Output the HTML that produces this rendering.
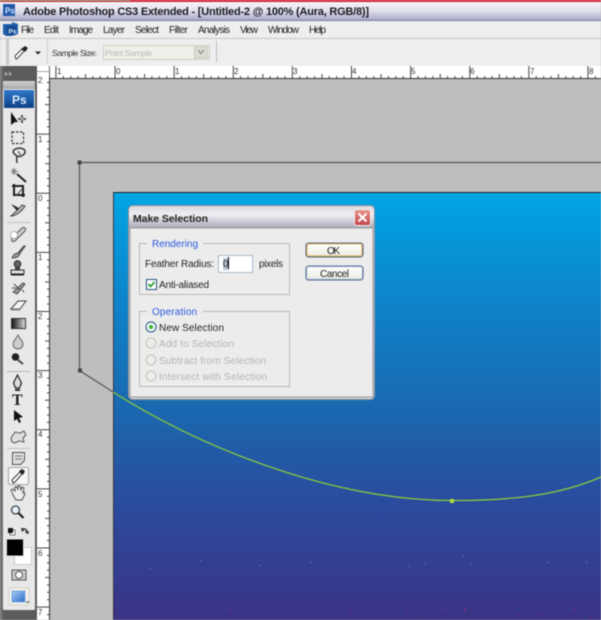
<!DOCTYPE html>
<html>
<head>
<meta charset="utf-8">
<style>
html,body{margin:0;padding:0;width:601px;height:620px;overflow:hidden;background:#bebebe}
svg{display:block;position:absolute;left:0;top:0;filter:blur(.45px)}
text{font-family:"Liberation Sans",sans-serif}
</style>
</head>
<body>
<svg width="601" height="620" viewBox="0 0 601 620" xmlns="http://www.w3.org/2000/svg">
<defs>
<linearGradient id="tb" x1="0" y1="0" x2="0" y2="1"><stop offset="0" stop-color="#f4f4f8"/><stop offset=".45" stop-color="#e4e4ee"/><stop offset="1" stop-color="#a9a9c6"/></linearGradient>
<linearGradient id="dt" x1="0" y1="0" x2="0" y2="1"><stop offset="0" stop-color="#d8d8e0"/><stop offset=".4" stop-color="#efeff3"/><stop offset="1" stop-color="#a8a8b8"/></linearGradient>
<linearGradient id="img" x1="0" y1="0" x2="0" y2="1"><stop offset="0" stop-color="#00a6e4"/><stop offset=".2" stop-color="#0b8ad0"/><stop offset=".5" stop-color="#1a69b0"/><stop offset=".72" stop-color="#2a4c9f"/><stop offset="1" stop-color="#3b3385"/></linearGradient>
<linearGradient id="ps" x1="0" y1="0" x2="0" y2="1"><stop offset="0" stop-color="#2f78c8"/><stop offset="1" stop-color="#0e3f88"/></linearGradient>
<linearGradient id="pt" x1="0" y1="0" x2="0" y2="1"><stop offset="0" stop-color="#d2d2d2"/><stop offset="1" stop-color="#a8a8a8"/></linearGradient>
<linearGradient id="gr" x1="0" y1="0" x2="1" y2="0"><stop offset="0" stop-color="#111"/><stop offset="1" stop-color="#ddd"/></linearGradient>
<linearGradient id="btn" x1="0" y1="0" x2="0" y2="1"><stop offset="0" stop-color="#fff"/><stop offset=".8" stop-color="#efefe8"/><stop offset="1" stop-color="#d8d8d0"/></linearGradient>
<linearGradient id="cl" x1="0" y1="0" x2="0" y2="1"><stop offset="0" stop-color="#e89a8a"/><stop offset="1" stop-color="#c0404a"/></linearGradient>
<linearGradient id="sm" x1="0" y1="0" x2="1" y2="1"><stop offset="0" stop-color="#a8d0f8"/><stop offset="1" stop-color="#2a68c8"/></linearGradient>
<pattern id="hr" x="55.4" y="66" width="59.12" height="13" patternUnits="userSpaceOnUse">
<path d="M.5 0V12M7.9 10V12M15.3 10V12M22.7 10V12M30.1 8V12M37.4 10V12M44.8 10V12M52.2 10V12" stroke="#444" stroke-width="1" fill="none"/>
</pattern>
<pattern id="vr" x="37" y="15.4" width="13" height="59.12" patternUnits="userSpaceOnUse">
<path d="M0 .5H12M10 7.9H12M10 15.3H12M10 22.7H12M8 30.1H12M10 37.4H12M10 44.8H12M10 52.2H12" stroke="#444" stroke-width="1" fill="none"/>
</pattern>
</defs>

<!-- title bar -->
<rect width="601" height="2" fill="#d8243c"/>
<rect x="0" y="0" width="130" height="1" fill="#909a60"/>
<rect y="2" width="601" height="18" fill="url(#tb)"/>
<rect y="20" width="601" height="1" fill="#7d7da0"/>
<rect x="3" y="4" width="12" height="12" fill="#2459a8"/>
<text x="5" y="13.5" font-size="8" font-weight="bold" fill="#cfe4ff">Ps</text>
<text x="23" y="15" font-size="11" font-weight="bold" fill="#1a1a22" textLength="346" lengthAdjust="spacing">Adobe Photoshop CS3 Extended - [Untitled-2 @ 100% (Aura, RGB/8)]</text>

<!-- menu -->
<rect y="21" width="601" height="17" fill="#eeeeee"/>
<rect y="38" width="601" height="1" fill="#c6c6c6"/>
<path d="M3 24h9v-2l6 2v10l-6 2H6l-3-2z" fill="#1f5ea8"/>
<rect x="7" y="26" width="9" height="9" fill="#174a90"/>
<text x="8.500" y="33.500" font-size="6.500" font-weight="bold" fill="#dce9fb">Ps</text>
<g font-size="10" fill="#222">
<text x="21" y="33" textLength="13">File</text>
<text x="44" y="33" textLength="15">Edit</text>
<text x="69" y="33" textLength="24">Image</text>
<text x="103" y="33" textLength="22">Layer</text>
<text x="135" y="33" textLength="24">Select</text>
<text x="169" y="33" textLength="19">Filter</text>
<text x="198" y="33" textLength="32">Analysis</text>
<text x="240" y="33" textLength="18">View</text>
<text x="268" y="33" textLength="31">Window</text>
<text x="309" y="33" textLength="17">Help</text>
</g>

<!-- options bar -->
<rect y="39" width="601" height="27" fill="#eeeeee"/>
<rect x="6" y="39" width="3" height="26" fill="#c8c8c8"/>
<rect x="47" y="39" width="1" height="26" fill="#cfcfcf"/>
<path d="M16 59l2-1 6-7-2-2-7 7z" fill="#fff" stroke="#444" stroke-width="1"/>
<path d="M21 49l4-3 3 2-3 4z" fill="#222"/>
<path d="M35 51.500h6l-3 3z" fill="#222"/>
<text x="52" y="56" font-size="8.500" fill="#333" textLength="45">Sample Size:</text>
<rect x="103.500" y="45.500" width="106" height="14" fill="#f0f0ea" stroke="#cdcdc4"/>
<text x="105" y="56" font-size="8.500" fill="#b8b8b8" textLength="47">Point Sample</text>
<rect x="194.500" y="47" width="13" height="11" fill="#dcdcd4" stroke="#c8c8c0"/>
<path d="M198 50l3 3.500 3-3.500" fill="none" stroke="#999" stroke-width="1.500"/>
<rect x="216" y="41" width="1" height="21" fill="#bdbdbd"/>

<!-- canvas bg -->
<rect x="50" y="79" width="551" height="541" fill="#bebebe"/>

<!-- rulers -->
<rect x="37" y="66" width="564" height="13" fill="#fff"/>
<rect x="37" y="78" width="564" height="1" fill="#333"/>
<rect x="37" y="66" width="13" height="554" fill="#fff"/>
<rect x="49" y="66" width="1" height="554" fill="#333"/>
<rect x="50" y="66" width="551" height="12" fill="url(#hr)"/>
<rect x="37" y="79" width="12" height="541" fill="url(#vr)"/>
<rect x="37" y="71" width="13" height="1" fill="#aaa"/>
<rect x="49" y="66" width="1" height="12" fill="#666"/>
<g font-size="8" fill="#333">
<text x="57" y="74">1</text><text x="116" y="74">0</text><text x="175" y="74">1</text><text x="234" y="74">2</text><text x="293" y="74">3</text><text x="352" y="74">4</text><text x="411" y="74">5</text><text x="470" y="74">6</text><text x="530" y="74">7</text><text x="589" y="74">8</text>
<text x="38" y="83">2</text><text x="38" y="142">1</text><text x="38" y="201">0</text><text x="38" y="260">1</text><text x="38" y="319">2</text><text x="38" y="378">3</text><text x="38" y="437">4</text><text x="38" y="497">5</text><text x="38" y="556">6</text><text x="38" y="615">7</text>
</g>

<!-- toolbox -->
<rect x="0" y="66" width="37" height="554" fill="#5c5c5c"/>
<rect x="0" y="66" width="3" height="554" fill="#707070"/>
<path d="M5 71.500l3 2.500-3 2.500zM9 71.500l3 2.500-3 2.500z" fill="#aaa"/>
<rect x="3" y="81" width="32" height="529" rx="1.500" fill="#e8e8e8"/>
<rect x="3" y="81" width="32" height="8" fill="url(#pt)"/>
<rect x="4" y="90" width="30" height="18" fill="url(#ps)"/>
<text x="12" y="104" font-size="12" font-weight="bold" fill="#d8e8fa">Ps</text>

<!-- move -->
<path d="M11 112v13l4-3h3z" fill="#111"/>
<path d="M18 119h8M22 115v8" stroke="#222" stroke-width="1.500"/>
<rect x="20" y="117" width="4" height="4" fill="#999"/>
<!-- marquee -->
<rect x="12" y="132" width="11.500" height="11.500" fill="none" stroke="#333" stroke-width="1.200" stroke-dasharray="2.500 1.500"/>
<!-- lasso -->
<path d="M14 150c4-3 10-2 11 1 1 3-5 7-8 5-3-2-5-4-3-6zM17 156c-1 3 0 5 0 7" fill="none" stroke="#333" stroke-width="1.500"/>
<path d="M18 151l3 5" stroke="#777" stroke-width="1.500"/>
<!-- wand -->
<path d="M17 174l9 8" stroke="#222" stroke-width="2"/>
<path d="M14 168v7M11 171.500h7M12 169l4 5M16 169l-4 5" stroke="#777" stroke-width=".9"/>
<!-- crop -->
<path d="M14 184v11h11M12 186h11v11" fill="none" stroke="#222" stroke-width="2"/>
<path d="M16 196l6-7" stroke="#555"/>
<!-- slice -->
<path d="M11 204l6 3 4 3-3 2z" fill="#222"/>
<path d="M11 216c5 0 11-5 14-10l-3-1c-3 4-7 7-11 11z" fill="#bbb" stroke="#333" stroke-width=".9"/>
<!-- separators -->
<rect x="7" y="222" width="23" height="1" fill="#c0c0c0"/>
<rect x="7" y="371" width="23" height="1" fill="#b4b4b4"/>
<rect x="7" y="448" width="23" height="1" fill="#c0c0c0"/>
<!-- heal -->
<path d="M12 238l10-10c2-2 5 1 3 3l-10 10c-2 2-5-1-3-3z" fill="#ccc" stroke="#555"/>
<circle cx="14" cy="235" r="3.500" fill="#fff" stroke="#999" stroke-width=".7"/>
<!-- brush -->
<path d="M18 252l6-7 2 1-6 8z" fill="#555"/>
<path d="M12 258c1-3 3-5 6-5l2 1c-1 3-4 4-8 4z" fill="#999" stroke="#333" stroke-width=".7"/>
<!-- stamp -->
<circle cx="17.500" cy="264" r="3.300" fill="#666" stroke="#222"/>
<rect x="15" y="267" width="5" height="3" fill="#444"/>
<rect x="11" y="270" width="13" height="4" fill="#ddd" stroke="#333"/>
<rect x="11" y="274" width="13" height="1.500" fill="#222"/>
<!-- history -->
<path d="M13 292l10-9 2 1-8 10z" fill="#999" stroke="#333" stroke-width=".8"/>
<path d="M14 284l6 6M12 288h4M22 290l2 2" stroke="#444"/>
<!-- eraser -->
<path d="M11 309l7-8h8l-6 8z" fill="#f4f4f4" stroke="#444"/>
<path d="M11 309h9v1.500h-9z" fill="#888"/>
<!-- gradient -->
<rect x="11.500" y="318.500" width="14" height="10" fill="url(#gr)" stroke="#333"/>
<!-- blur -->
<path d="M18 335c2 4 5 6 5 9a5 5 0 0 1-10 0c0-3 3-5 5-9z" fill="#ccc" stroke="#666"/>
<!-- dodge -->
<circle cx="15.500" cy="357" r="3.800" fill="#222"/>
<path d="M18 360l5 4" stroke="#444" stroke-width="2"/>
<!-- pen -->
<path d="M17.500 375l4 8-2 5h-4l-2-5z" fill="#ddd" stroke="#222" stroke-width="1.200"/>
<path d="M15 389h5v2h-5z" fill="#333"/>
<!-- type -->
<text x="12" y="405" font-size="16" font-weight="bold" fill="#222" style="font-family:'Liberation Serif',serif">T</text>
<!-- path select -->
<path d="M14 421v-11l9 7-4 1 2 4-2 1-2-4z" fill="#111"/>
<!-- shape -->
<path d="M11 438l4-6 5 1 4-2 2 4-3 3 1 4-5-1-4 2-3-1z" fill="#ddd" stroke="#555" stroke-width="1"/>
<!-- notes -->
<path d="M12.500 452.500h12v8l-4 4h-8z" fill="#ddd" stroke="#555"/>
<path d="M15 456h7M15 459h7" stroke="#777"/>
<!-- eyedropper selected -->
<rect x="8.500" y="467.500" width="20" height="17" rx="1.500" fill="#f6f6f6" stroke="#a4a4b0"/>
<path d="M13 483l2-1 7-8-2-2-8 8z" fill="#fff" stroke="#333"/>
<path d="M19 471l3-2 3 2-2 4z" fill="#222"/>
<!-- hand -->
<path d="M13 495l-2-5 2-1 2 2v-4l2 0 1 3v-4l2 0 1 4 1-3 2 1-1 5 1-1 1 2-3 6h-6z" fill="#eee" stroke="#444" stroke-width=".9"/>
<!-- zoom -->
<circle cx="15.500" cy="510" r="4" fill="#e4eef8" stroke="#444" stroke-width="1.300"/>
<path d="M18.500 513l5 5" stroke="#222" stroke-width="2.200"/>
<!-- small colors -->
<rect x="10" y="530" width="5" height="5" fill="#fff" stroke="#444" stroke-width=".7"/>
<rect x="8" y="528" width="5" height="5" fill="#111"/>
<path d="M22 529c3-1 5 1 6 4M21.500 528l1 3 2-2M28 534l-2-2 3 0" fill="none" stroke="#333" stroke-width="1.200"/>
<!-- colors -->
<rect x="14.500" y="547.500" width="17" height="17" fill="#fff" stroke="#ccc"/>
<rect x="6.500" y="539" width="17" height="17" fill="#000" stroke="#ddd"/>
<!-- quick mask -->
<rect x="12" y="570" width="14" height="10" fill="#ccc" stroke="#555"/>
<circle cx="19" cy="575" r="3.500" fill="#fff" stroke="#555"/>
<!-- screen mode -->
<rect x="9" y="588" width="20" height="17" rx="2" fill="#f4f4ee" stroke="#d0d0c8"/>
<rect x="12" y="591" width="13" height="11" fill="url(#sm)" stroke="#7ba8e0"/>
<path d="M26 603h3l-1.500-2z M27 603l2-2v2z" fill="#222"/>

<!-- document -->
<rect x="113" y="192" width="488" height="428" fill="url(#img)"/>
<rect x="113" y="192" width="1" height="428" fill="#333344"/>
<rect x="113" y="192" width="488" height="1" fill="#223"/>

<!-- noise -->
<g>
<rect x="407" y="610" width="1" height="1" fill="#c02a7a"/><rect x="444" y="610" width="1" height="1" fill="#c02a7a"/><rect x="464" y="610" width="1" height="1" fill="#c02a7a"/><rect x="519" y="615" width="1" height="1" fill="#d02060"/><rect x="464" y="609" width="1" height="1" fill="#d02060"/><rect x="574" y="608" width="1" height="1" fill="#d02060"/><rect x="538" y="614" width="1" height="1" fill="#c02a9a"/><rect x="590" y="616" width="1" height="1" fill="#d02060"/><rect x="422" y="616" width="1" height="1" fill="#c02a7a"/>
<rect x="409" y="566" width="1" height="1" fill="#7aa0d8"/><rect x="425" y="563" width="1" height="1" fill="#7aa0d8"/><rect x="463" y="556" width="1" height="1" fill="#7aa0d8"/><rect x="470" y="564" width="1" height="1" fill="#7aa0d8"/><rect x="547" y="562" width="1" height="1" fill="#7aa0d8"/><rect x="586" y="562" width="1" height="1" fill="#7aa0d8"/>
<rect x="200" y="560" width="1" height="1" fill="#7aa0d8"/><rect x="260" y="565" width="1" height="1" fill="#7aa0d8"/><rect x="310" y="562" width="1" height="1" fill="#7aa0d8"/><rect x="150" y="568" width="1" height="1" fill="#7aa0d8"/><rect x="350" y="612" width="1" height="1" fill="#c02a7a"/><rect x="230" y="610" width="1" height="1" fill="#c02a7a"/>
</g>

<!-- paths -->
<path d="M79.500 162.500H601M79.500 162.500V370.500L113 392" fill="none" stroke="#555" stroke-width="1.200"/>
<path d="M113 392C205 450 335 500.500 452 500.500C505 500.500 555 497 601 477" fill="none" stroke="#86c83e" stroke-width="1.300"/>
<rect x="77.500" y="160.500" width="4" height="4" fill="#444"/>
<rect x="78" y="368.500" width="4" height="4" fill="#444"/>
<rect x="450" y="499" width="4" height="4" fill="#b4dc3c"/>

<!-- dialog -->
<rect x="128.500" y="205.500" width="246" height="194" rx="4" fill="#d0d0d4" stroke="#8c8c98"/>
<path d="M129 228v-18a4 4 0 0 1 4-4h237a4 4 0 0 1 4 4v18z" fill="url(#dt)"/>
<text x="133" y="222" font-size="10.500" font-weight="bold" fill="#222" textLength="75">Make Selection</text>
<rect x="354.500" y="209.500" width="16" height="16" rx="2" fill="url(#cl)" stroke="#f4f0f0"/>
<path d="M358.500 213.500l8 8M366.500 213.500l-8 8" stroke="#fff" stroke-width="2"/>
<rect x="130" y="228" width="243" height="169" fill="#ededed" stroke="#9a9aa2"/>
<rect x="131" y="229" width="241" height="167" fill="#ececec"/>

<rect x="139.500" y="243.500" width="150" height="51" fill="none" stroke="#b8b8b0"/>
<rect x="147" y="241" width="56" height="5" fill="#ececec"/>
<text x="152" y="247" font-size="10" fill="#2a5ae0" textLength="46">Rendering</text>
<text x="145" y="267" font-size="10" fill="#222" textLength="69">Feather Radius:</text>
<rect x="218.500" y="255.500" width="34" height="17" fill="#fff" stroke="#a8b8c8"/>
<rect x="223" y="258" width="6" height="12" fill="#b8c4d8"/>
<text x="223" y="267" font-size="10" fill="#222">0</text>
<rect x="228" y="257" width="1" height="12" fill="#000"/>
<text x="259" y="267" font-size="10" fill="#222" textLength="24">pixels</text>
<rect x="146.500" y="279.500" width="10" height="10" fill="#fff" stroke="#1c5180"/>
<path d="M148.500 284l2 2.500 4-4.500" fill="none" stroke="#30a030" stroke-width="1.800"/>
<text x="159" y="288" font-size="10" fill="#222" textLength="50">Anti-aliased</text>

<rect x="139.500" y="311.500" width="150" height="75" fill="none" stroke="#b8b8b0"/>
<rect x="147" y="309" width="56" height="5" fill="#ececec"/>
<text x="152" y="315" font-size="10" fill="#2a5ae0" textLength="45">Operation</text>
<circle cx="151" cy="327" r="5" fill="#fff" stroke="#1c5180"/>
<circle cx="151" cy="327" r="2.200" fill="#3cb43c"/>
<text x="159" y="331" font-size="10" fill="#222" textLength="65">New Selection</text>
<g fill="#eeeee8" stroke="#c4c4bc">
<circle cx="151" cy="343" r="5"/><circle cx="151" cy="360" r="5"/><circle cx="151" cy="376" r="5"/>
</g>
<g font-size="10" fill="#b4b4ac">
<text x="159" y="347" textLength="75">Add to Selection</text>
<text x="159" y="364" textLength="107">Subtract from Selection</text>
<text x="159" y="380" textLength="108">Intersect with Selection</text>
</g>

<rect x="306" y="243" width="57" height="14" rx="2.500" fill="url(#btn)" stroke="#1c3c70" stroke-width=".8"/>
<rect x="307" y="244" width="55" height="12" rx="1.500" fill="none" stroke="#eab24a" stroke-width="1"/>
<text x="327" y="254" font-size="10" fill="#222" textLength="13">OK</text>
<rect x="306" y="266" width="57" height="14" rx="2.500" fill="url(#btn)" stroke="#1c3c70" stroke-width=".8"/>
<rect x="307" y="267" width="55" height="12" rx="1.500" fill="none" stroke="#c0d0e8" stroke-width=".8"/>
<text x="320" y="277" font-size="10" fill="#222" textLength="29">Cancel</text>
</svg>
</body>
</html>
